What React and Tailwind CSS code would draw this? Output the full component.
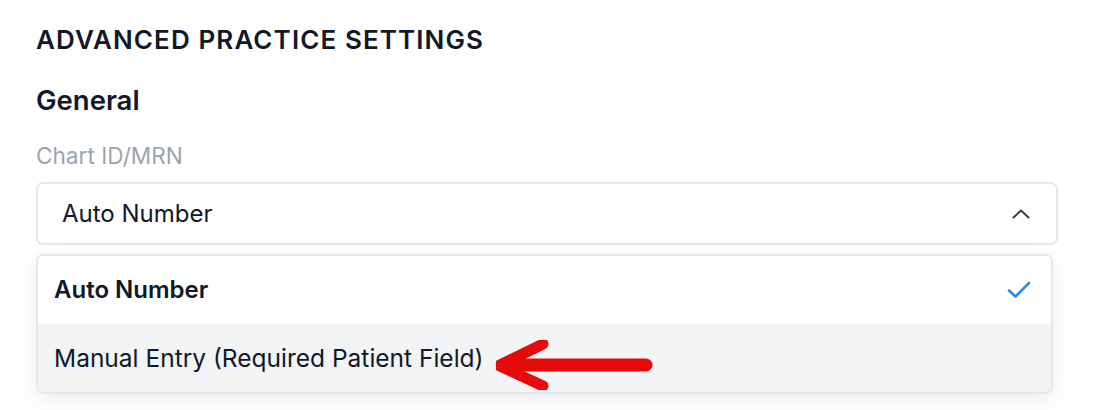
import React from "react";

export default function App() {
  return (
    <div
      className="w-[1094px] h-[410px] bg-white overflow-hidden pl-[36px] pr-[36px] pt-[24px] text-[#111827]"
      style={{ fontFamily: "Inter, 'Noto Sans', sans-serif" }}
    >
      <h1 className="text-[26px] leading-[32px] font-semibold tracking-[1.1px]">ADVANCED PRACTICE SETTINGS</h1>
      <h2 className="mt-[27px] text-[27.5px] leading-[34px] font-semibold">General</h2>
      <div className="mt-[25px] text-[22.6px] leading-[28px] text-[#9ca3af]">Chart ID/MRN</div>
      <div className="mt-[12px] h-[63px] border-2 border-[#e5e7eb] rounded-[7px] flex items-center justify-between pl-[24px] pr-[26px]">
        <span className="text-[24px]">Auto Number</span>
        <svg width="18" height="10" viewBox="0 0 18 10" fill="none">
          <path d="M1.5 8.5 L9 1.5 L16.5 8.5" stroke="#374151" strokeWidth="2" strokeLinecap="round" strokeLinejoin="round" />
        </svg>
      </div>
      <div className="mt-[9px] mr-[5px] border-2 border-[#e5e7eb] rounded-[7px] overflow-hidden shadow-[0_6px_24px_rgba(0,0,0,0.08)]">
        <div className="h-[68px] bg-white flex items-center justify-between pl-[16px] pr-[20px]">
          <span className="text-[24px] font-semibold">Auto Number</span>
          <svg width="24" height="18" viewBox="0 0 24 18" fill="none">
            <path d="M2 9.5 L8.5 15.5 L22 2" stroke="#2b86e6" strokeWidth="2.6" strokeLinecap="round" strokeLinejoin="round" />
          </svg>
        </div>
        <div className="relative h-[68px] bg-[#f3f4f6] flex items-center pl-[16px]">
          <span className="text-[24.5px]">Manual Entry (Required Patient Field)</span>
          <svg className="absolute left-[458px] top-[16px]" width="170" height="50" viewBox="458 313 170 50" fill="none">
            <path d="M608 338 L470 338" stroke="#e60a0a" strokeWidth="13" strokeLinecap="round" />
            <path d="M505 317 L461 338.5 L505 359" stroke="#e60a0a" strokeWidth="11" strokeLinecap="round" strokeLinejoin="round" />
          </svg>
        </div>
      </div>
    </div>
  );
}
